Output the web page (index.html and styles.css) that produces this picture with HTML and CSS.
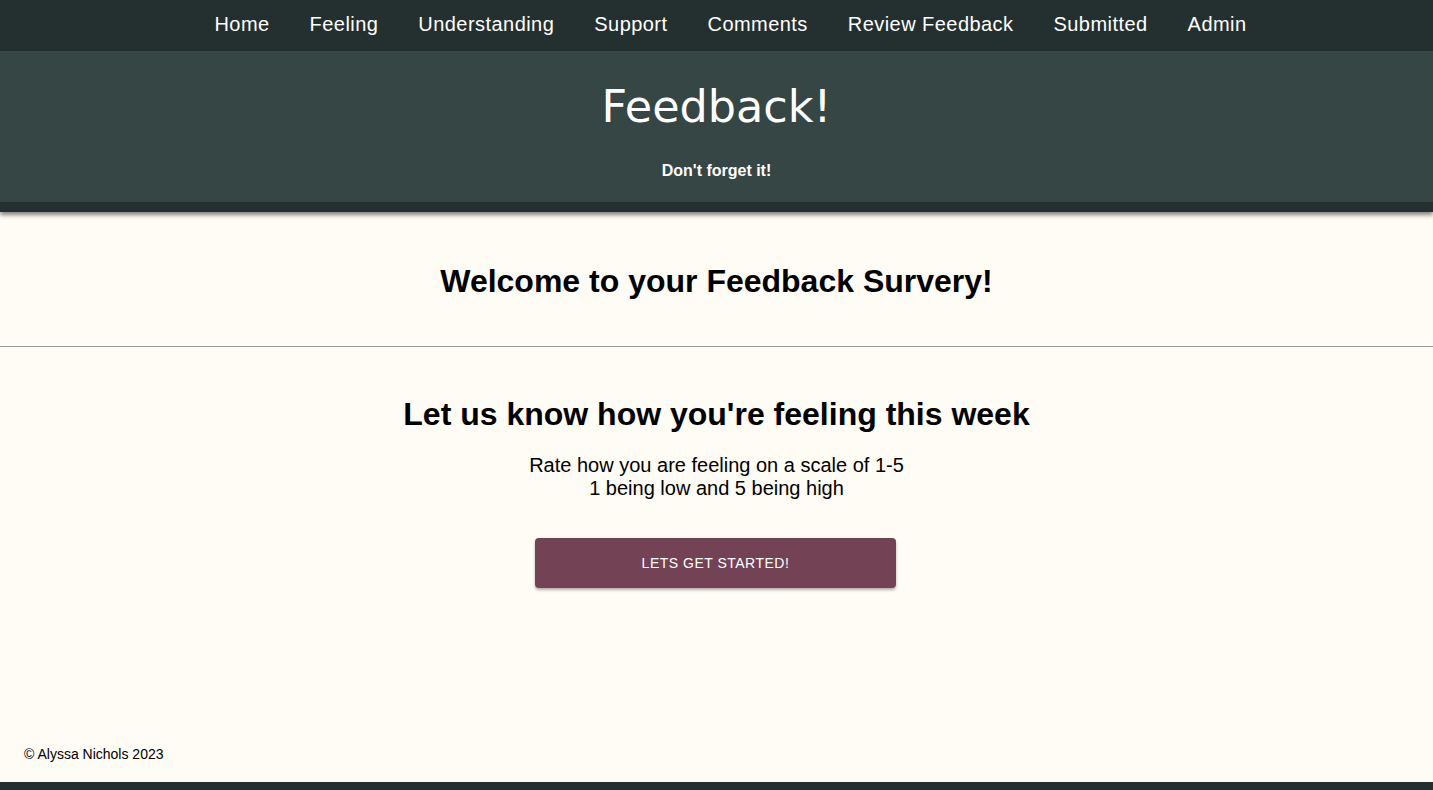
FILE: index.html
```html
<!DOCTYPE html>
<html lang="en">
<head>
<meta charset="utf-8">
<title>Feedback</title>
<link rel="stylesheet" href="styles.css">
</head>
<body>
<div class="page">
  <nav class="nav">
    <a href="#">Home</a>
    <a href="#">Feeling</a>
    <a href="#">Understanding</a>
    <a href="#">Support</a>
    <a href="#">Comments</a>
    <a href="#">Review Feedback</a>
    <a href="#">Submitted</a>
    <a href="#">Admin</a>
  </nav>
  <header class="header">
    <h1 class="title">Feedback!</h1>
    <p class="subtitle">Don't forget it!</p>
  </header>
  <div class="strip"></div>
  <main class="main">
    <h2 class="welcome">Welcome to your Feedback Survery!</h2>
    <hr class="rule">
    <section class="feeling">
      <h2 class="feeling-title">Let us know how you're feeling this week</h2>
      <p class="feeling-text">Rate how you are feeling on a scale of 1-5<br>1 being low and 5 being high</p>
      <button class="start">Lets get started!</button>
    </section>
  </main>
  <footer class="footer">© Alyssa Nichols 2023</footer>
  <div class="bottom-bar"></div>
</div>
</body>
</html>
```

FILE: styles.css
```css
* { box-sizing: border-box; }
html, body { margin: 0; padding: 0; }
body {
  background: #fffbf5;
  font-family: "Liberation Sans", Arial, sans-serif;
  color: #000;
}
.page {
  min-height: 790px;
  display: flex;
  flex-direction: column;
}
.nav {
  height: 51px;
  background: #243030;
  display: flex;
  justify-content: center;
  align-items: center;
  gap: 40px;
  padding-left: 28px;
}
.nav a {
  color: #fff;
  text-decoration: none;
  font-size: 20px;
  letter-spacing: 0.45px;
  margin-top: -2px;
}
.header {
  background: #354645;
  height: 151px;
  display: flex;
  flex-direction: column;
  align-items: center;
  color: #fff;
}
.title {
  margin: 29px 0 0;
  font-family: "DejaVu Sans", Verdana, sans-serif;
  font-weight: normal;
  font-size: 44.5px;
  line-height: 54px;
}
.subtitle {
  margin: 28px 0 0;
  font-weight: bold;
  font-size: 16px;
  line-height: 18px;
}
.strip {
  height: 10px;
  background: #243030;
  box-shadow: 0 3px 4px rgba(40, 30, 30, 0.55);
}
.main {
  flex: 1;
  display: flex;
  flex-direction: column;
  align-items: stretch;
}
.welcome {
  margin: 50px 0 0;
  text-align: center;
  font-size: 32px;
  line-height: 38px;
}
.rule {
  margin: 46px 0 0;
  border: 0;
  border-top: 1px solid #9a9a9a;
  height: 0;
}
.feeling {
  display: flex;
  flex-direction: column;
  align-items: center;
}
.feeling-title {
  margin: 48px 0 0;
  font-size: 32px;
  line-height: 38px;
}
.feeling-text {
  margin: 21px 0 0;
  text-align: center;
  font-size: 20px;
  line-height: 23px;
}
.start {
  margin-top: 38px;
  margin-right: 2px;
  width: 361px;
  height: 50px;
  background: #734254;
  color: #fff;
  border: 0;
  border-radius: 4px;
  font-family: "Liberation Sans", Arial, sans-serif;
  font-size: 14px;
  text-transform: uppercase;
  letter-spacing: 0.5px;
  box-shadow: 0 2px 3px rgba(0, 0, 0, 0.3);
}
.footer {
  padding: 0 24px 20px;
  font-size: 14px;
  line-height: 16px;
}
.bottom-bar {
  height: 8px;
  background: #243030;
}
```
